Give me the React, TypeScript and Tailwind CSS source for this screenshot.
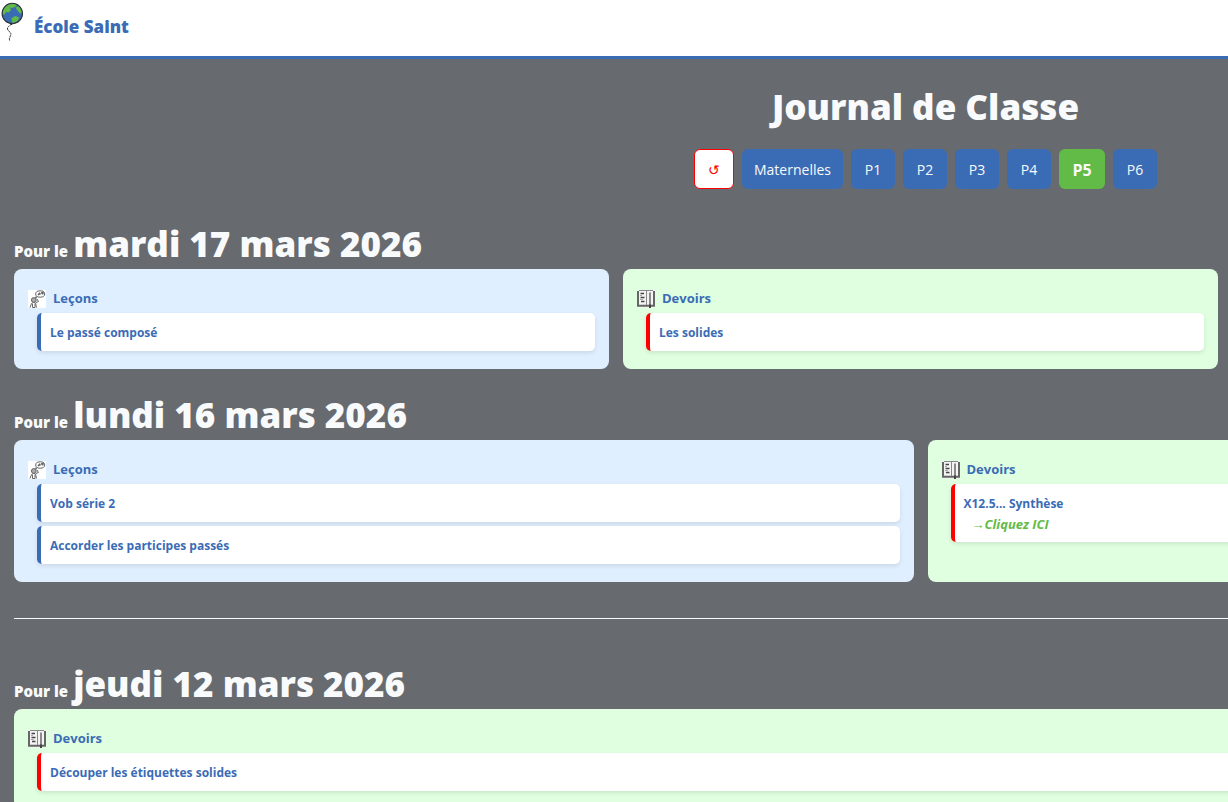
import { useState } from "react";

type Kind = "lecons" | "devoirs";
type Item = { text: string; link?: string };
type Block = { kind: Kind; items: Item[] };
type Day = { date: string; cols: string; blocks: Block[] };

const classes = ["Maternelles", "P1", "P2", "P3", "P4", "P5", "P6"];

const upcoming: Day[] = [
  {
    date: "mardi 17 mars 2026",
    cols: "grid-cols-3",
    blocks: [
      { kind: "lecons", items: [{ text: "Le passé composé" }] },
      { kind: "devoirs", items: [{ text: "Les solides" }] },
    ],
  },
  {
    date: "lundi 16 mars 2026",
    cols: "grid-cols-2",
    blocks: [
      { kind: "lecons", items: [{ text: "Vob série 2" }, { text: "Accorder les participes passés" }] },
      { kind: "devoirs", items: [{ text: "X12.5... Synthèse", link: "→Cliquez ICI" }] },
    ],
  },
];

const past: Day[] = [
  {
    date: "jeudi 12 mars 2026",
    cols: "grid-cols-1",
    blocks: [{ kind: "devoirs", items: [{ text: "Découper les étiquettes solides" }] }],
  },
];

function Logo() {
  return (
    <svg width="24" height="42" viewBox="0 0 24 42" fill="none" aria-hidden="true">
      <circle cx="12.3" cy="13.5" r="10.2" fill="#3a6cb5" />
      <path d="M2.5 12C4 6 8 3.4 13 3.4L17.5 4.6L15.5 6.5L12.5 8L10 7.5L11 10L8.5 12.5L6 12L4.5 14.5L2.5 14Z" fill="#62bb46" />
      <path d="M15.5 7.5L19 6L21.5 9.5L22.3 13.5L19.5 13L17.5 10.5Z" fill="#62bb46" />
      <path d="M11.5 18L15.5 16L19 17.5L18 20.5L14 23.3L12 22Z" fill="#62bb46" />
      <circle cx="12.3" cy="13.5" r="10.2" stroke="#2b3038" strokeWidth="1.1" />
      <path d="M10.5 25H12.5L11.5 23.5Z" fill="#222" />
      <path d="M11.5 24C9.5 26 7 27 7.5 29C8 31.5 11.5 32 10.8 35C10.3 37 8.6 38 9.8 41" stroke="#333" strokeWidth="1" strokeDasharray="2.2 0.6" />
    </svg>
  );
}

function LessonIcon() {
  return (
    <svg width="18" height="18" viewBox="0 0 18 18" fill="none" stroke="#666" aria-hidden="true">
      <rect width="18" height="18" fill="#fff" stroke="none" />
      <ellipse cx="12.2" cy="4" rx="4.5" ry="3.2" strokeWidth="1" />
      <path d="M8.5 6.5L7.5 8.5M10 5L11.5 3.5L12.5 4.5M13 3L15 2.5L14.5 4.5" strokeWidth="1.6" />
      <circle cx="5.8" cy="10" r="2.4" fill="#aaa" strokeWidth="1" />
      <path d="M2 17.5L3.5 13.5L5.5 12.5L7.5 13L8.5 17.5M4.5 14V17.5H7V14M8 12.5L10.5 11.5L9 9" strokeWidth="1" />
    </svg>
  );
}

function HomeworkIcon() {
  return (
    <svg width="18" height="18" viewBox="0 0 18 18" fill="none" aria-hidden="true">
      <path d="M0 0H18V16L13 18L0 17Z" fill="#f4f4f4" />
      <path d="M1 1V15.8H17V1" stroke="#666" strokeWidth="2" />
      <path d="M2 0.5H16M9.5 1V15" stroke="#888" strokeWidth="1" />
      <path d="M3.5 3.5H7M3.5 7.5H7.5M4 11.5H7.5" stroke="#444" strokeWidth="1.6" />
      <path d="M3 5.5H5M3 9.5H6" stroke="#aaa" strokeWidth="1" />
      <path d="M13 2.5V15" stroke="#444" strokeWidth="1.2" />
      <path d="M13 14.5V18" stroke="#444" strokeWidth="2" />
    </svg>
  );
}

function Card({ block }: { block: Block }) {
  const lesson = block.kind === "lecons";
  return (
    <section className={`rounded-lg px-[14px] pt-[18px] pb-[18px] ${lesson ? "bg-[#e0efff]" : "bg-[#e0ffe0]"}`}>
      <h3 className="flex h-[26px] items-start gap-[7px] text-[13px] leading-[22px] font-bold text-[#3a6cb5]">
        <span className="mt-[3px]">{lesson ? <LessonIcon /> : <HomeworkIcon />}</span>
        {lesson ? "Leçons" : "Devoirs"}
      </h3>
      <ul className="flex flex-col gap-1 pl-[9px]">
        {block.items.map((item) => (
          <li
            key={item.text}
            className={`rounded-[5px] border-l-4 bg-white pt-[10px] pr-2 pb-2 pl-[9px] text-xs leading-5 font-bold text-[#3a6cb5] shadow-[0_2px_4px_rgba(0,0,0,0.1)] ${lesson ? "border-[#3a6cb5]" : "border-[#ff0000]"}`}
          >
            {item.text}
            {item.link && (
              <a href="#" className="block pl-2 text-[13px] text-[#62bb46] italic">
                {item.link}
              </a>
            )}
          </li>
        ))}
      </ul>
    </section>
  );
}

function DaySection({ day }: { day: Day }) {
  return (
    <div>
      <h2 className="mb-[3px] flex h-[45px] items-baseline gap-[5px] text-[15px] leading-[46px] font-extrabold">
        Pour le <span className="text-[35px] leading-[46px]">{day.date}</span>
      </h2>
      <div className={`grid gap-[14px] ${day.cols}`}>
        {day.blocks.map((block) => (
          <Card key={block.kind} block={block} />
        ))}
      </div>
    </div>
  );
}

export default function App() {
  const [selected, setSelected] = useState("P5");

  return (
    <div className="min-h-screen overflow-hidden bg-[#676a6e] font-['Segoe_UI','Open_Sans',sans-serif] text-[#f8fafc]">
      <header className="flex h-[59px] gap-[10px] border-b-[3px] border-[#3a6cb5] bg-white">
        <Logo />
        <a href="#" className="pt-[15px] text-[17px] leading-6 font-extrabold text-[#3a6cb5]">
          École Saint
        </a>
      </header>

      {/* The journal is wider than most windows, the columns run off to the right */}
      <main className="min-w-[1851px] pb-8">
        <h1 className="pt-6 text-center text-[35px] leading-[48px] font-extrabold">Journal de Classe</h1>
        <nav className="mt-[18px] flex justify-center gap-2">
          <button
            type="button"
            aria-label="Réinitialiser"
            onClick={() => setSelected("")}
            className="h-10 w-10 rounded-md border border-[#ff0000] bg-white pt-[2px] text-sm text-[#ff0000]"
          >
            ↺
          </button>
          {classes.map((name) => (
            <button
              key={name}
              type="button"
              onClick={() => setSelected(name)}
              className={`h-10 rounded-md pt-[2px] ${selected === name ? "min-w-[46px] bg-[#62bb46] px-3 text-base font-bold" : "min-w-11 bg-[#3a6cb5] px-3 text-sm"}`}
            >
              {name}
            </button>
          ))}
        </nav>

        <div className="flex flex-col gap-[23px] pt-8 pr-6 pl-[14px]">
          {upcoming.map((day) => (
            <DaySection key={day.date} day={day} />
          ))}
        </div>
        <hr className="mt-9 mr-6 mb-[42px] ml-[14px] border-[#f8fafc]" />
        <div className="flex flex-col gap-[23px] pr-6 pl-[14px]">
          {past.map((day) => (
            <DaySection key={day.date} day={day} />
          ))}
        </div>
      </main>
    </div>
  );
}
